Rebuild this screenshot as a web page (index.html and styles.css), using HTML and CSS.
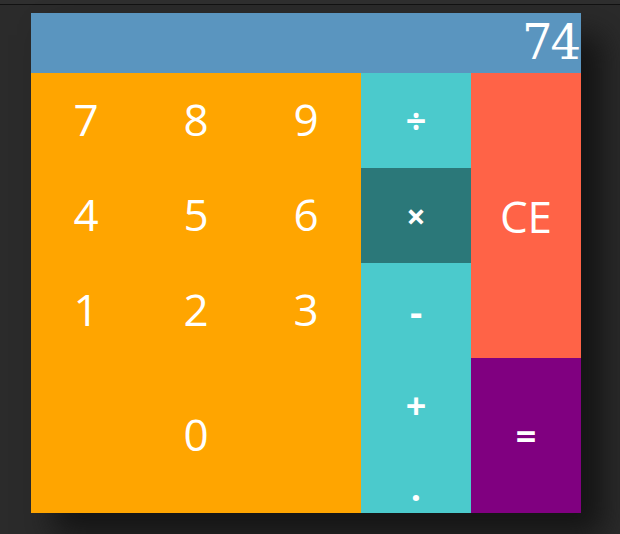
FILE: index.html
```html
<!DOCTYPE html>
<html>
<head>
<meta charset="utf-8">
<link rel="stylesheet" href="styles.css">
</head>
<body>
<div class="topbar"></div>
<div class="calc">
  <div class="display">74</div>
  <div class="keys">
    <div class="key num k7">7</div>
    <div class="key num k8">8</div>
    <div class="key num k9">9</div>
    <div class="key op div">÷</div>
    <div class="key ce">CE</div>
    <div class="key num k4">4</div>
    <div class="key num k5">5</div>
    <div class="key num k6">6</div>
    <div class="key op mul">×</div>
    <div class="key num k1">1</div>
    <div class="key num k2">2</div>
    <div class="key num k3">3</div>
    <div class="key op sub">-</div>
    <div class="key num zero">0</div>
    <div class="key op add">+</div>
    <div class="key op dot">.</div>
    <div class="key eq">=</div>
  </div>
</div>
</body>
</html>
```
FILE: styles.css
```css
html, body {
  margin: 0;
  padding: 0;
}
body {
  background: #2b2b2b;
  width: 620px;
  height: 534px;
  overflow: hidden;
  font-family: "Open Sans", "DejaVu Sans", sans-serif;
}
.topbar {
  height: 4px;
  background: #2f2f2f;
  border-bottom: 1px solid #121212;
}
.calc {
  width: 550px;
  margin: 8px 0 0 31px;
  box-shadow: 22px 22px 30px #141414;
}
.display {
  height: 60px;
  background: #5a95bf;
  color: #fff;
  font-family: "DejaVu Serif", "Liberation Serif", serif;
  font-size: 48px;
  line-height: 58px;
  text-align: right;
  padding-right: 2px;
  letter-spacing: -2px;
}
.keys {
  display: grid;
  grid-template-columns: repeat(5, 110px);
  grid-template-rows: 95px 95px 95px 95px 60px;
  background: #ffa500;
}
.key {
  display: flex;
  align-items: center;
  justify-content: center;
  color: #fff;
}
.num {
  background: #ffa500;
  font-size: 44px;
  padding-bottom: 3px;
}
.op {
  background: #4bcacc;
  font-size: 36px;
  font-weight: 700;
}
.mul {
  background: #2b7879;
  font-size: 34px;
}
.sub {
  font-size: 38px;
}
.dot {
  padding-top: 8px;
}
.ce {
  grid-column: 5;
  grid-row: 1 / 4;
  background: #ff6347;
  font-size: 44px;
}
.zero {
  grid-column: 2;
  grid-row: 4 / 6;
}
.add {
  grid-column: 4;
  grid-row: 4;
}
.dot {
  grid-column: 4;
  grid-row: 5;
}
.eq {
  grid-column: 5;
  grid-row: 4 / 6;
  background: #800080;
  font-size: 36px;
  font-weight: 700;
}
```
